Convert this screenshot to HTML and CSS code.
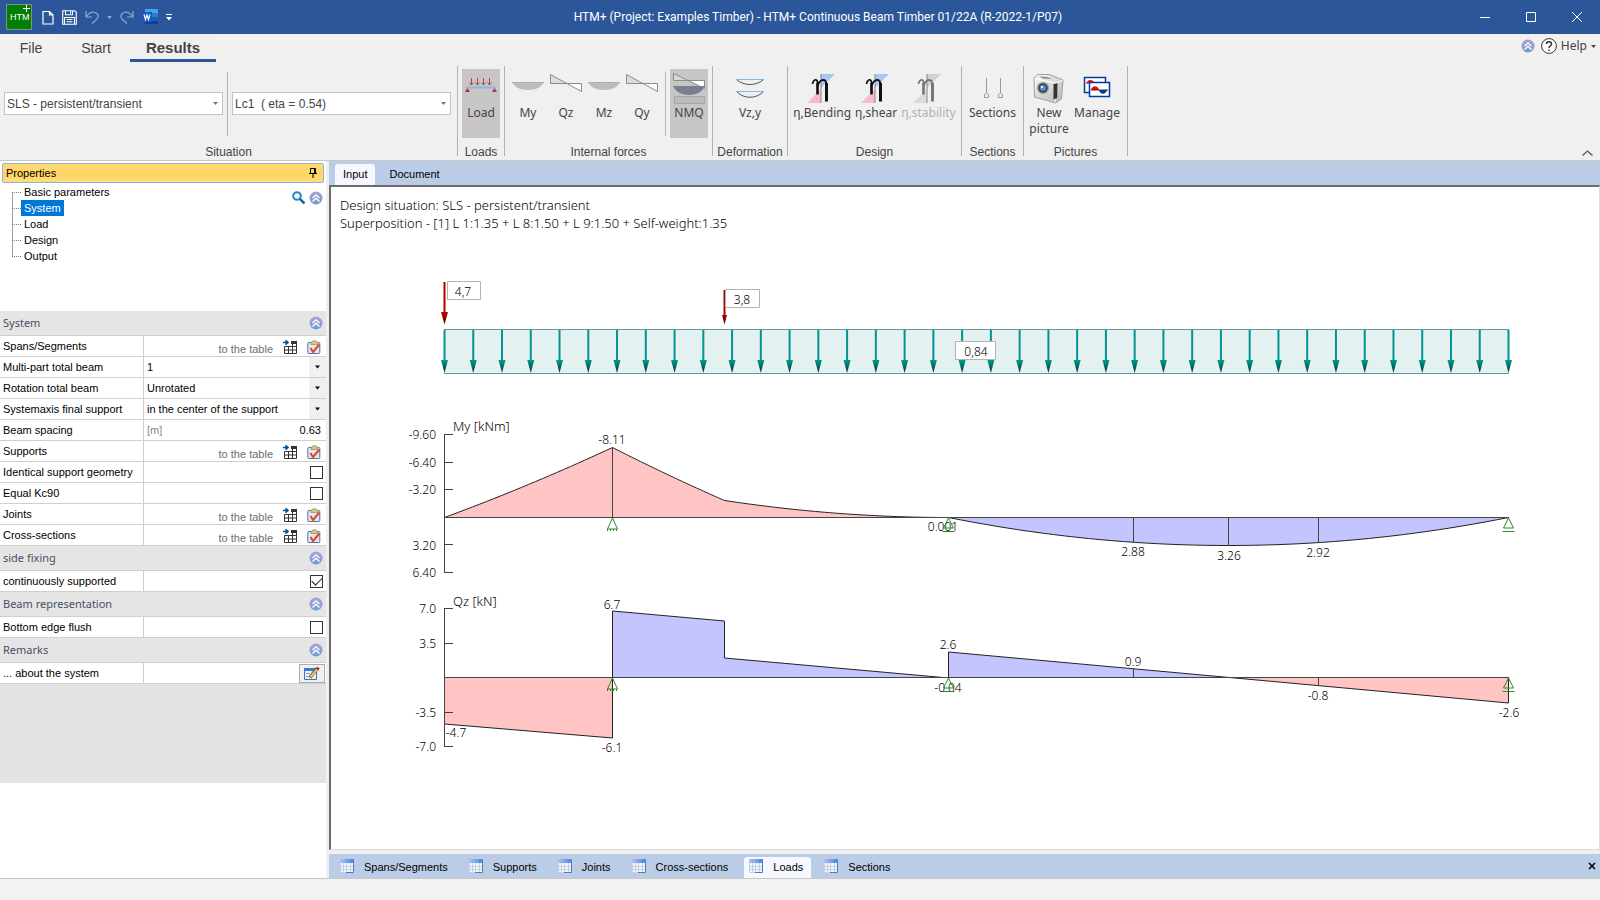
FILE: index.html
```html
<!DOCTYPE html>
<html lang="en">
<head>
    <meta charset="utf-8">
    <title>HTM+ Continuous Beam Timber</title>
    <link rel="stylesheet" href="styles.css">
</head>
<body>
    <!-- shared icons -->
    <svg class="sprite" width="0" height="0">
        <defs>
            <linearGradient id="g-up" x1="0" y1="0" x2="0" y2="1">
                <stop offset="0" stop-color="#a9a3d6"/><stop offset="1" stop-color="#6f9ed2"/>
            </linearGradient>
            <linearGradient id="g-grid" x1="0" y1="0" x2="1" y2="0">
                <stop offset="0" stop-color="#a8c4fa"/><stop offset="1" stop-color="#4f80e4"/>
            </linearGradient>
            <linearGradient id="g-teal" x1="0" y1="0" x2="0" y2="1">
                <stop offset="0" stop-color="#009a94"/><stop offset="1" stop-color="#003430"/>
            </linearGradient>
            <linearGradient id="g-red" x1="0" y1="0" x2="0" y2="1">
                <stop offset="0" stop-color="#c80000"/><stop offset="1" stop-color="#4a0000"/>
            </linearGradient>
            <linearGradient id="g-cam" x1="0" y1="0" x2="1" y2="1">
                <stop offset="0" stop-color="#fafafa"/><stop offset="1" stop-color="#b4b4b4"/>
            </linearGradient>
        </defs>
        <symbol id="i-up" viewBox="0 0 14 14">
            <circle cx="7" cy="7" r="6.5" fill="url(#g-up)"/>
            <path d="M3.5 7 7 3.8 10.5 7M3.5 10.4 7 7.2 10.5 10.4" fill="none" stroke="#fff" stroke-width="1.3"/>
        </symbol>
        <symbol id="i-caret" viewBox="0 0 5 3"><path d="M0 0h5L2.500 3z" fill="currentColor"/></symbol>
        <symbol id="i-goto" viewBox="0 0 14 14">
            <path d="M0 2.500h4M2.500 .3 5 2.500 2.500 4.700" fill="none" stroke="#00529b" stroke-width="1.6"/>
            <path d="M8 1h6v3H8z" fill="#333"/>
            <path d="M1.500 6.500h12v7h-12zM1.500 10h12M5.500 6v7.500M9.500 3v10.500M13.500 3v4" fill="none" stroke="#333"/>
        </symbol>
        <symbol id="i-clip" viewBox="0 0 14 14">
            <rect x=".8" y="2.500" width="12" height="11" rx="1" fill="#dfe8f8" stroke="#5a6fa0"/>
            <path d="M4 4.500V2.500L6 .8h3l1.800 1.700v2z" fill="#d8c27a" stroke="#8a7a48" stroke-width=".6"/>
            <path d="M3.500 8 6 12 12.500 4.500" fill="none" stroke="#e04a20" stroke-width="2"/>
        </symbol>
        <symbol id="i-grid" viewBox="0 0 15 15">
            <path d="M.5.500h13v13H.5z" fill="#f2f6fd" stroke="#c4d0e4"/>
            <path d="M0 0h14v4H0z" fill="url(#g-grid)"/>
            <path d="M1 7.500h12M1 10.500h12M3.500 4v9M6.500 4v9M10.500 4v9" stroke="#c3cee0"/>
            <path d="M13.500 4v9.500H6" fill="none" stroke="#5c78a8"/>
        </symbol>
        <symbol id="i-sag" viewBox="0 0 32 32">
            <path d="M0 10h32c-2 5-8 8-16 8S2 15 0 10z" fill="#bdbdbd"/><path d="M0 10.500h32" stroke="#b0b0b0"/>
        </symbol>
        <symbol id="i-shear" viewBox="0 0 32 32">
            <path d="M.5 2.500v9h16z" fill="#dcdcdc"/><path d="M16 11.500h15.500v8z" fill="#fff"/>
            <path d="M.5 2.500v9h31v8z" fill="none" stroke="#8c8c8c"/>
        </symbol>
        <symbol id="i-eta" viewBox="0 0 32 32">
            <path d="M15 2h14L15 16z" fill="var(--up)"/><path d="M15 17v14H1z" fill="var(--down)"/>
            <path d="M15 2v29" stroke="#888"/>
            <path d="M6.500 12c.5-4 4-6 5-2v12M11.500 14c1.500-4 3.500-6 5.500-6 2.500 0 3.500 2 3.500 5" fill="none" stroke="currentColor" stroke-width="1.800"/>
            <path d="M11.500 11v11.500" stroke="currentColor" stroke-width="2.400"/>
            <path d="M20.500 11v18.500" stroke="currentColor" stroke-width="3"/>
        </symbol>
    </svg>

    <header class="titlebar">
        <div class="quick">
            <svg class="logo" viewBox="0 0 26 26"><path d="M.5.500h25v25H.5z" fill="#008000" stroke="#8c8c8c"/><path d="M20.500 1v7M17 4.500h7" stroke="#fff"/><text x="4" y="16">HTM</text></svg>
            <button aria-label="New"><svg width="12" height="15"><path d="M1 1.500h6.500l3.500 3.500v9H1zM7.500 1.500V5H11" fill="none" stroke="#fff" stroke-width="1.200"/></svg></button>
            <button aria-label="Save"><svg width="15" height="15"><path d="M.7 .7h12l1.600 1.600v12H.7zM3.500 .7v4h7v-4M8.500 1.500v2M2.500 14V7.500h10V14M4.500 9.500h6M4.500 11.700h6" fill="none" stroke="#fff" stroke-width="1.100"/></svg></button>
            <button class="dim" aria-label="Undo"><svg width="14" height="14"><path d="M1 1v6h6M1.500 6.500C4 3 7 1.500 10 2.500c4 1.500 4 5 1 7.500l-4 3.500" fill="none" stroke="currentColor" stroke-width="1.200"/></svg></button>
            <button class="dim" aria-label="Undo list"><svg width="5" height="3"><use href="#i-caret"/></svg></button>
            <button class="dim" aria-label="Redo"><svg width="14" height="14"><path d="M13 1v6H7M12.500 6.500C10 3 7 1.500 4 2.500 0 4 0 7.500 3 10l4 3.500" fill="none" stroke="currentColor" stroke-width="1.200"/></svg></button>
            <button aria-label="Word"><svg width="16" height="16"><path d="M3 0h13v4H3z" fill="#41a5ee"/><path d="M3 4h13v4H3z" fill="#2b7cd3"/><path d="M3 8h13v4H3z" fill="#185abd"/><path d="M3 12h13v3H3z" fill="#103f91"/><path d="M0 3h10v10H0z" fill="#185abd"/><path d="m2 5.500 1.500 5L5 6l1.500 4.500 1.500-5" fill="none" stroke="#fff" stroke-width="1.200"/></svg></button>
            <button aria-label="Customize"><svg width="6" height="7"><path d="M0 .5h6" stroke="#fff"/><path d="M0 3h6L3 6.500z" fill="#fff"/></svg></button>
        </div>
        <div class="title">HTM+ (Project: Examples Timber) - HTM+ Continuous Beam Timber 01/22A (R-2022-1/P07)</div>
        <div class="window-buttons">
            <button aria-label="Minimize"><svg width="10" height="10"><path d="M0 5.500h10" stroke="#fff"/></svg></button>
            <button aria-label="Maximize"><svg width="10" height="10"><path d="M.5.500h9v9h-9z" fill="none" stroke="#fff"/></svg></button>
            <button aria-label="Close"><svg width="10" height="10"><path d="m0 0 10 10M10 0 0 10" stroke="#fff"/></svg></button>
        </div>
    </header>

    <nav class="menu">
        <button class="menu-tab file">File</button>
        <button class="menu-tab start">Start</button>
        <button class="menu-tab results">Results</button>
        <div class="help">
            <svg width="14" height="14"><use href="#i-up"/></svg>
            <button><svg width="16" height="16"><circle cx="8" cy="8" r="7.400" fill="#fff" stroke="#333"/><path d="M5.500 6c0-3 5-3 5 0 0 2-2.500 2-2.500 4M8 11.500v1.500" fill="none" stroke="#333" stroke-width="1.500"/></svg>Help<svg width="5" height="3"><use href="#i-caret"/></svg></button>
        </div>
    </nav>

    <div class="ribbon">
        <section class="group situation">
            <div class="group-body">
                <div class="combo">
                    <select aria-label="Design situation"><option>SLS - persistent/transient</option></select>
                    <svg width="5" height="3"><use href="#i-caret"/></svg>
                </div>
                <span class="divider"></span>
                <div class="combo">
                    <select aria-label="Load case"><option>Lc1 &nbsp;( eta = 0.54)</option></select>
                    <svg width="5" height="3"><use href="#i-caret"/></svg>
                </div>
            </div>
            <h2>Situation</h2>
        </section>
        <section class="group loads">
            <div class="group-body">
                <button class="tool active">
                    <svg viewBox="0 0 32 32"><path d="M6.500 6v7M12.500 6v7M18.500 6v7M24.500 6v7M4.500 10.500l2 2.500 2-2.500M10.500 10.500l2 2.500 2-2.500M16.500 10.500l2 2.500 2-2.500M22.500 10.500l2 2.500 2-2.500" fill="none" stroke="#b04848"/><path d="M1 15.500h30" stroke="#8ab8ee" stroke-width="2"/><path d="M0 20l2.500-4L5 20zM27 20l2.500-4 2.500 4z" fill="#b83030"/></svg>
                    Load
                </button>
            </div>
            <h2>Loads</h2>
        </section>
        <section class="group forces">
            <div class="group-body">
                <button class="tool"><svg><use href="#i-sag"/></svg>My</button>
                <button class="tool"><svg><use href="#i-shear"/></svg>Qz</button>
                <button class="tool"><svg><use href="#i-sag"/></svg>Mz</button>
                <button class="tool"><svg><use href="#i-shear"/></svg>Qy</button>
                <span class="divider"></span>
                <button class="tool active">
                    <svg viewBox="0 0 32 32"><path d="M.5 1.500v7h16z" fill="#d8d8d8"/><path d="M16 8.500h15.500v8z" fill="#fff"/><path d="M.5 1.500v7h31v8z" fill="none" stroke="#8c8c8c"/><path d="M0 14h32c-2 5-8 9-16 9S2 19 0 14z" fill="#788090"/><path d="M1.500 24.500h30v7h-30z" fill="#bcbcbc" stroke="#a4a4a4"/></svg>
                    NMQ
                </button>
            </div>
            <h2>Internal forces</h2>
        </section>
        <section class="group deformation">
            <div class="group-body">
                <button class="tool">
                    <svg viewBox="0 0 32 32"><path d="M2 7.500h28M2 19.500h28" stroke="#80b8f0"/><path d="M3 8c7 6 19 6 26 0M3 20c7 7 19 7 26 0" fill="none" stroke="#555"/></svg>
                    Vz,y
                </button>
            </div>
            <h2>Deformation</h2>
        </section>
        <section class="group design">
            <div class="group-body">
                <button class="tool eta"><svg><use href="#i-eta"/></svg>η,Bending</button>
                <button class="tool eta"><svg><use href="#i-eta"/></svg>η,shear</button>
                <button class="tool eta" disabled><svg><use href="#i-eta"/></svg>η,stability</button>
            </div>
            <h2>Design</h2>
        </section>
        <section class="group sections">
            <div class="group-body">
                <button class="tool">
                    <svg viewBox="0 0 32 32"><path d="M9.500 6v15M23.500 6v15M7.500 25.500v-3l2-1.500 2 1.500v3zM21.500 25.500v-3l2-1.500 2 1.500v3z" fill="none" stroke="#999"/></svg>
                    Sections
                </button>
            </div>
            <h2>Sections</h2>
        </section>
        <section class="group pictures">
            <div class="group-body">
                <button class="tool">
                    <svg viewBox="0 0 32 32">
                        <path d="M1 6 5 2.500l11 0 14 5.500-1.500 19-6 4L1.500 25z" fill="url(#g-cam)" stroke="#a0a0a0"/>
                        <path d="M1.500 6.500 22 11l7.500-2.500M22 11v19.500" fill="none" stroke="#fff"/>
                        <path d="M6 4.500l8 .5 5 2-9-.5z" fill="#8a8a8a"/>
                        <path d="M20.500 12l4-.8-.3 14.800-3.700 1.500z" fill="#333"/>
                        <circle cx="10" cy="16" r="6.200" fill="#a8a8a8"/><circle cx="10" cy="16" r="4.800" fill="#33465c"/>
                        <circle cx="10" cy="16" r="3" fill="#4f90cc"/><circle cx="9" cy="15" r="1.200" fill="#e4f2fc"/>
                    </svg>
                    New picture
                </button>
                <button class="tool">
                    <svg viewBox="0 0 32 32"><path d="M3.500 5.500h21v15h-21z" fill="#fff" stroke="#003c9c" stroke-width="1.500"/><path d="M5 12c1-5 6-5 8-2z" fill="#f00"/><path d="M8.500 10.500h20v14h-20z" fill="#fff" stroke="#003c9c" stroke-width="1.500"/><path d="M10 18c1-5 7-5 8 0z" fill="#f00"/><path d="M18 18c1 5 7 5 8 0z" fill="#003c9c"/><path d="M10 18h17" stroke="#333"/></svg>
                    Manage
                </button>
            </div>
            <h2>Pictures</h2>
        </section>
        <button class="collapse" aria-label="Collapse ribbon"><svg width="11" height="6"><path d="M.5 5.500l5-4.500 5 4.500" fill="none" stroke="#555" stroke-width="1.300"/></svg></button>
    </div>

    <div class="workspace">
        <aside class="properties">
            <div class="panel-title">
                Properties
                <svg width="8" height="10"><path d="M1.500 5.500V.5h5v5M0 5.500h8M4 6v4M5.500 1v4" fill="none" stroke="#000"/></svg>
            </div>
            <div class="tree">
                <ul>
                    <li><a href="#">Basic parameters</a></li>
                    <li><a href="#" class="selected">System</a></li>
                    <li><a href="#">Load</a></li>
                    <li><a href="#">Design</a></li>
                    <li><a href="#">Output</a></li>
                </ul>
                <div class="tree-tools">
                    <svg width="13" height="13"><circle cx="5" cy="5" r="3.800" fill="#eef8ff" stroke="#2b84c6" stroke-width="2"/><path d="m8 8 4.500 4.500" stroke="#1a5a96" stroke-width="2.400"/></svg>
                    <svg width="14" height="14"><use href="#i-up"/></svg>
                </div>
            </div>

            <div class="fields">
                <h3>System<svg width="14" height="14"><use href="#i-up"/></svg></h3>
                <div class="row"><span>Spans/Segments</span><div class="to-table"><a href="#">to the table</a><svg><use href="#i-goto"/></svg><svg><use href="#i-clip"/></svg></div></div>
                <div class="row"><label for="parts">Multi-part total beam</label><div class="pick"><select id="parts"><option>1</option></select><svg><use href="#i-caret"/></svg></div></div>
                <div class="row"><label for="rotation">Rotation total beam</label><div class="pick"><select id="rotation"><option>Unrotated</option></select><svg><use href="#i-caret"/></svg></div></div>
                <div class="row"><label for="axis">Systemaxis final support</label><div class="pick"><select id="axis"><option>in the center of the support</option></select><svg><use href="#i-caret"/></svg></div></div>
                <div class="row"><label for="spacing">Beam spacing</label><div class="number"><span>[m]</span><input id="spacing" type="text" value="0.63"></div></div>
                <div class="row"><span>Supports</span><div class="to-table"><a href="#">to the table</a><svg><use href="#i-goto"/></svg><svg><use href="#i-clip"/></svg></div></div>
                <div class="row"><label for="geometry">Identical support geometry</label><div class="check"><input id="geometry" type="checkbox"></div></div>
                <div class="row"><label for="kc90">Equal Kc90</label><div class="check"><input id="kc90" type="checkbox"></div></div>
                <div class="row"><span>Joints</span><div class="to-table"><a href="#">to the table</a><svg><use href="#i-goto"/></svg><svg><use href="#i-clip"/></svg></div></div>
                <div class="row"><span>Cross-sections</span><div class="to-table"><a href="#">to the table</a><svg><use href="#i-goto"/></svg><svg><use href="#i-clip"/></svg></div></div>
                <h3>side fixing<svg width="14" height="14"><use href="#i-up"/></svg></h3>
                <div class="row"><label for="continuous">continuously supported</label><div class="check"><input id="continuous" type="checkbox" checked></div></div>
                <h3>Beam representation<svg width="14" height="14"><use href="#i-up"/></svg></h3>
                <div class="row"><label for="flush">Bottom edge flush</label><div class="check"><input id="flush" type="checkbox"></div></div>
                <h3>Remarks<svg width="14" height="14"><use href="#i-up"/></svg></h3>
                <div class="row"><span>... about the system</span><div class="note"><button aria-label="Edit remark"><svg width="16" height="13" viewBox="0 0 16 13"><path d="M.5 1.500h12v11H.5z" fill="#e8f0ff" stroke="#4a6cb0"/><path d="M0 1h13v3H0z" fill="#3f74d8"/><path d="M2 6.500h4M2 9.500h4" stroke="#8fa4c8"/><path d="m6 10.500 7-9" stroke="#604818" stroke-width="3.400"/><path d="m6.500 10 7-8.500" stroke="#e8c860" stroke-width="2"/><path d="m13 2.500 1.500-2" stroke="#a03030" stroke-width="3"/></svg></button></div></div>
            </div>
        </aside>

        <main class="main">
            <div class="tabs top">
                <button class="tab current">Input</button>
                <button class="tab">Document</button>
            </div>
            <div class="canvas">
                <p>Design situation: SLS - persistent/transient</p>
                <p>Superposition - [1] L 1:1.35 + L 8:1.50 + L 9:1.50 + Self-weight:1.35</p>
                <svg class="chart" viewBox="0 0 1268 617" preserveAspectRatio="xMinYMin meet">
                    <defs>
                        <g id="fixed"><path class="sup" d="M0 1-5 12H5ZM-5 12v2M-2 12v2M1 12v2M4 12v2"/></g>
                        <g id="roller"><path class="sup" d="M0 1-5 11H5ZM-6 14.500H6"/></g>
                    </defs>

                    <!-- loads -->
                    <g>
                        <path d="M113 97h1065v44H113z" fill="#e4f1f1"/>
                        <path d="M113 97.500h1065M113 141.500h1065" stroke="#5c9e9c"/>
                        <g id="arrows"></g>
                        <path d="M113.500 50v34M393.500 58v27" stroke="#b00000" stroke-width="2"/>
                        <path d="M110 80h7l-3.500 12.500zM391 83h5l-2.500 9.500z" fill="url(#g-red)"/>
                        <g class="tag">
                            <path d="M116.500 49.500h33v18h-33zM394.500 57.500h34v18h-34zM624.500 109.500h40v18h-40z"/>
                            <text x="132" y="64">4,7</text>
                            <text x="411" y="72">3,8</text>
                            <text x="645" y="124">0,84</text>
                        </g>
                    </g>

                    <!-- bending moment -->
                    <g transform="translate(0 285)">
                        <path class="neg" id="moment-neg"/>
                        <path class="pos" id="moment-pos"/>
                        <path class="axis" d="M113.500-82.500v138M113-82.500h9M113-54.500h9M113-27.500h9M113 27.500h9M113 55.500h9M113 .5h1065M281.500-69v69M802.500 0v25M897.500 0v28M987.500 0v25"/>
                        <g class="scale">
                            <text x="105" y="-78">-9.60</text>
                            <text x="105" y="-50">-6.40</text>
                            <text x="105" y="-23">-3.20</text>
                            <text x="105" y="33">3.20</text>
                            <text x="105" y="60">6.40</text>
                        </g>
                        <text class="name" x="122" y="-86">My [kNm]</text>
                        <g class="mark">
                            <text x="281" y="-73">-8.11</text>
                            <text x="612" y="14">0.001</text>
                            <text x="802" y="39">2.88</text>
                            <text x="898" y="43">3.26</text>
                            <text x="987" y="40">2.92</text>
                        </g>
                        <use href="#fixed" x="281.500"/><use href="#roller" x="617.500"/><use href="#roller" x="1177.500"/>
                    </g>

                    <!-- shear force -->
                    <g transform="translate(0 445)">
                        <path class="neg" d="M113.500.500V47L281.500 61V.5zM898.500.500 1177.500 26V.5z"/>
                        <path class="pos" d="M281.500.500V-66L393.500-56v37L612 .5zM617.500.500V-25L898.500.500z"/>
                        <path class="axis" d="M113.500-68.500v138M113-68.500h9M113-33.500h9M113 35.500h9M113 69.500h9M113 .5h1065M802.500-8v8M987.500 0v9"/>
                        <g class="scale">
                            <text x="105" y="-64">7.0</text>
                            <text x="105" y="-29">3.5</text>
                            <text x="105" y="40">-3.5</text>
                            <text x="105" y="74">-7.0</text>
                        </g>
                        <text class="name" x="122" y="-71">Qz [kN]</text>
                        <g class="mark">
                            <text x="281" y="-68">6.7</text>
                            <text x="125" y="60">-4.7</text>
                            <text x="281" y="75">-6.1</text>
                            <text x="617" y="-28">2.6</text>
                            <text x="617" y="15">-0.04</text>
                            <text x="802" y="-11">0.9</text>
                            <text x="987" y="23">-0.8</text>
                            <text x="1178" y="40">-2.6</text>
                        </g>
                        <use href="#fixed" x="281.500"/><use href="#roller" x="617.500"/><use href="#roller" x="1177.500"/>
                    </g>
                </svg>
            </div>
            <div class="tabs bottom">
                <button class="tab"><svg><use href="#i-grid"/></svg>Spans/Segments</button>
                <button class="tab"><svg><use href="#i-grid"/></svg>Supports</button>
                <button class="tab"><svg><use href="#i-grid"/></svg>Joints</button>
                <button class="tab"><svg><use href="#i-grid"/></svg>Cross-sections</button>
                <button class="tab current"><svg><use href="#i-grid"/></svg>Loads</button>
                <button class="tab"><svg><use href="#i-grid"/></svg>Sections</button>
                <button class="close" aria-label="Close tables"><svg width="8" height="8"><path d="m1 1 6 6M7 1 1 7" stroke="#000" stroke-width="1.600"/></svg></button>
            </div>
        </main>
    </div>
    <footer class="status"></footer>

    <script>
        // uniform load: one arrow per segment plus the closing one
        const segments = 37;
        const start = 113.5, end = 1177.5;
        let arrows = '';
        for (let i = 0; i <= segments; i++) {
            const x = start + (end - start) * i / segments;
            arrows += `<path d="M${x} 98v32" stroke="#009490" stroke-width="2"/>` +
                `<path d="M${x - 3.5} 128h7l-3.500 13z" fill="url(#g-teal)"/>`;
        }
        document.getElementById('arrows').innerHTML = arrows;

        // parabola between two points, sag measured from the chord
        function parabola(x1, y1, x2, y2, sag) {
            const steps = 48;
            let points = '';
            for (let i = 0; i <= steps; i++) {
                const t = i / steps;
                const y = y1 + (y2 - y1) * t + 4 * sag * t * (1 - t);
                points += ` ${(x1 + (x2 - x1) * t).toFixed(2)} ${y.toFixed(2)}`;
            }
            return points;
        }
        document.getElementById('moment-neg').setAttribute('d',
            'M' + parabola(113.5, 0.5, 281.5, -69.5, 2) +
            parabola(281.5, -69.5, 393.5, -16.5, 1) +
            parabola(393.5, -16.5, 612, 0.5, 4) + 'z');
        document.getElementById('moment-pos').setAttribute('d',
            'M' + parabola(617.5, 0.5, 1177.5, 0.5, 28) + 'z');
    </script>
</body>
</html>
```

FILE: styles.css
```css
* {
    box-sizing: border-box;
}

body {
    margin: 0;
    min-height: 100vh;
    display: flex;
    flex-direction: column;
    background: #f0f0f0;
    color: #000;
    font: 11px/16px "Liberation Sans", Arial, sans-serif;
}

button {
    padding: 0;
    border: none;
    background: none;
    color: inherit;
    font: inherit;
}

svg {
    display: block;
    flex: none;
}

.sprite {
    position: absolute;
}

/* title bar */
.titlebar {
    display: flex;
    align-items: center;
    height: 34px;
    background: #2b579a;
    color: #fff;
}

.quick {
    display: flex;
    align-items: center;
    gap: 8px;
    width: 174px;
    padding-left: 6px;
}

.logo {
    width: 26px;
    height: 26px;
    margin-right: 2px;
}

.logo text {
    fill: #fff;
    font: 9px "Liberation Sans", Arial, sans-serif;
}

.dim {
    color: #8ea8d0;
}

.title {
    flex: 1;
    text-align: center;
    font-family: Roboto, sans-serif;
    font-size: 12px;
}

.window-buttons {
    display: flex;
}

.window-buttons button {
    display: grid;
    place-items: center;
    width: 46px;
    height: 34px;
}

/* menu tabs */
.menu {
    display: flex;
    height: 28px;
    background: #f3f1ef;
    color: #444;
}

.menu-tab {
    padding-top: 2px;
    font-size: 14px;
    border-bottom: 3px solid transparent;
}

.file {
    width: 62px;
}

.start {
    width: 68px;
    background: #f0f0f0;
}

.results {
    width: 86px;
    background: #f0f0f0;
    border-color: #2b579a;
    font-size: 15px;
    font-weight: bold;
}

.help {
    display: flex;
    align-items: center;
    gap: 6px;
    height: 24px;
    margin-left: auto;
    padding-right: 4px;
}

.help button {
    display: flex;
    align-items: center;
    gap: 4px;
    font-family: "Noto Sans", sans-serif;
    font-size: 12px;
}

/* ribbon */
.ribbon {
    display: flex;
    height: 99px;
    padding: 4px 7px 4px 0;
    border-bottom: 1px solid #c8c6c4;
    color: #444;
}

.group {
    display: flex;
    flex-direction: column;
    border-right: 1px solid #b1b1b1;
}

.group-body {
    display: flex;
    flex: 1;
    justify-content: center;
    padding-top: 3px;
}

.group h2 {
    height: 12px;
    margin: 0;
    font-size: 12px;
    font-weight: normal;
    line-height: 16px;
    text-align: center;
    white-space: nowrap;
}

.situation { width: 458px; }
.loads { width: 47px; }
.forces { width: 208px; }
.deformation { width: 75px; }
.design { width: 174px; }
.sections { width: 62px; }
.pictures { width: 104px; }

.situation .group-body {
    align-items: center;
    justify-content: flex-start;
    padding: 0 0 3px 4px;
}

.divider {
    width: 1px;
    height: 64px;
    margin: 3px 4px;
    background: #b1b1b1;
}

.combo,
.pick {
    display: grid;
    align-items: center;
}

.combo select,
.combo svg,
.pick select,
.pick svg {
    grid-area: 1 / 1;
}

.combo select,
.pick select {
    appearance: none;
    border: none;
    border-radius: 0;
    background: #fff;
    color: inherit;
    font: inherit;
}

.combo {
    width: 219px;
    font-size: 12px;
}

.combo select {
    height: 23px;
    padding: 0 2px;
    border: 1px solid #c3c3c3;
}

.combo svg {
    justify-self: end;
    margin-right: 5px;
    color: #777;
    pointer-events: none;
}

.tool {
    display: flex;
    flex-direction: column;
    align-items: center;
    width: 38px;
    height: 69px;
    padding-top: 3px;
    font-family: "Noto Sans", sans-serif;
    font-size: 12px;
}

.tool svg {
    width: 32px;
    height: 32px;
    margin-bottom: 1px;
}

.tool.active {
    background: #c8c6c4;
}

.eta {
    --up: #a8c8f4;
    --down: #f8b8d0;
    width: auto;
    padding-left: 2px;
    padding-right: 2px;
}

.eta svg {
    color: #111;
}

.eta:disabled {
    --up: #d0d0d0;
    --down: #dcdcdc;
    color: #b0b0b0;
}

.eta:disabled svg {
    color: #777;
}

.sections .tool,
.pictures .tool {
    width: 48px;
}

.pictures .group-body {
    justify-content: flex-start;
    padding-left: 1px;
}

.collapse {
    align-self: flex-end;
    margin-left: auto;
}

/* workspace */
.workspace {
    display: flex;
    flex: 1;
}

.properties {
    width: 326px;
    background: #fff;
}

.panel-title {
    display: flex;
    align-items: center;
    justify-content: space-between;
    height: 20px;
    margin: 2px 2px 1px;
    padding: 0 6px 0 3px;
    border: 1px solid #8fb0e0;
    border-radius: 2px;
    background: linear-gradient(#ffdb70, #ffd564 60%, #ffdf7c);
}

.tree {
    display: flex;
    justify-content: space-between;
    height: 127px;
}

.tree ul {
    margin: 0;
    padding: 0 0 0 12px;
    list-style: none;
}

.tree li {
    display: flex;
    align-items: center;
    height: 16px;
    background: linear-gradient(#999, #999) 0 0 / 1px 100% no-repeat;
}

.tree li:first-child {
    background-position: 0 8px;
}

.tree li:last-child {
    background-size: 1px 50%;
}

.tree li::before {
    content: "";
    width: 9px;
    border-top: 1px dotted #777;
}

.tree a {
    padding: 0 3px;
    color: #000;
    text-decoration: none;
}

.tree a.selected {
    background: #0078d7;
    color: #fff;
}

.tree-tools {
    display: flex;
    gap: 4px;
    padding: 7px 3px 0 0;
}

.fields {
    height: 472px;
    background: #e3e3e3;
}

.fields h3 {
    display: flex;
    align-items: center;
    justify-content: space-between;
    height: 25px;
    margin: 0;
    padding: 0 3px;
    border-bottom: 1px solid #cfcfcf;
    background: #e5e5e5;
    color: #4a4f63;
    font: 11px/16px "Noto Sans", sans-serif;
}

.row {
    display: grid;
    grid-template-columns: 143px 1fr;
    height: 21px;
    border-bottom: 1px solid #cfcfcf;
    background: #fff;
}

.row > :first-child {
    padding: 2px 3px;
    white-space: nowrap;
}

.row > :last-child {
    border-left: 1px solid #cfcfcf;
}

.to-table {
    display: flex;
    align-items: center;
    justify-content: flex-end;
    gap: 10px;
    padding-right: 5px;
}

.to-table a {
    padding-top: 5px;
    color: #6d6d6d;
    text-decoration: none;
}

.to-table svg {
    width: 14px;
    height: 14px;
}

.pick select {
    width: 100%;
    height: 20px;
    padding: 0 3px;
}

.pick svg {
    justify-self: end;
    width: 17px;
    height: 20px;
    padding: 8px 6px;
    background: #f0f0f0;
    pointer-events: none;
}

.number {
    display: flex;
    align-items: center;
    padding: 0 5px 0 3px;
    color: #888;
}

.number input {
    flex: 1;
    min-width: 0;
    padding: 0;
    border: none;
    font: inherit;
    text-align: right;
}

.check,
.note {
    display: flex;
    align-items: center;
    justify-content: flex-end;
    padding-right: 3px;
}

.check input {
    appearance: none;
    width: 13px;
    height: 13px;
    margin: 0;
    border: 1px solid #333;
    background: #fff;
}

.check input:checked::before {
    content: "";
    display: block;
    width: 9px;
    height: 5px;
    margin: 1px;
    border-left: 1px solid #222;
    border-bottom: 1px solid #222;
    transform: rotate(-45deg);
}

.note {
    padding-right: 1px;
}

.note button {
    padding: 2px 4px;
    border: 1px solid #adadad;
    background: #f0f0f0;
}

/* drawing area */
.main {
    display: flex;
    flex: 1;
    flex-direction: column;
    min-width: 0;
    padding-left: 3px;
}

.tabs {
    display: flex;
    height: 24px;
    background: #bbcde6;
}

.tab {
    display: flex;
    align-items: center;
    padding: 0 8px 2px;
}

.tab.current {
    border-radius: 3px 3px 0 0;
    background: #f5f9ff;
}

.top {
    gap: 6px;
    padding: 3px 6px 0;
}

.bottom {
    gap: 8px;
    margin-top: 4px;
    padding: 3px 4px 0 6px;
}

.bottom .tab {
    gap: 9px;
    padding: 0 8px 2px 5px;
}

.bottom .tab svg {
    width: 15px;
    height: 15px;
}

.close {
    margin-left: auto;
    padding-bottom: 4px;
}

.canvas {
    flex: 1;
    padding-top: 9px;
    border: solid #6b6b6b;
    border-width: 2px 0 0 2px;
    border-right: 1px solid #dcdcdc;
    border-bottom: 1px solid #dcdcdc;
    background: #fff;
    font: 12px/18px "Noto Sans", sans-serif;
    font-weight: 300;
}

.canvas p {
    margin: 0;
    padding-left: 9px;
    font-size: 13px;
}

.chart {
    width: 100%;
}

.chart .name {
    font-size: 13px;
}

.scale {
    text-anchor: end;
}

.mark,
.tag {
    text-anchor: middle;
}

.tag path {
    fill: #fff;
    stroke: #b4b4b4;
}

.neg {
    fill: #ffc4c4;
    stroke: #222;
}

.pos {
    fill: #c4c4ff;
    stroke: #222;
}

.axis {
    fill: none;
    stroke: #444;
}

.sup {
    fill: none;
    stroke: #2c8a2c;
}

.status {
    height: 22px;
    border-top: 1px solid #c8c6c4;
    background: #f3f2f1;
}
```
